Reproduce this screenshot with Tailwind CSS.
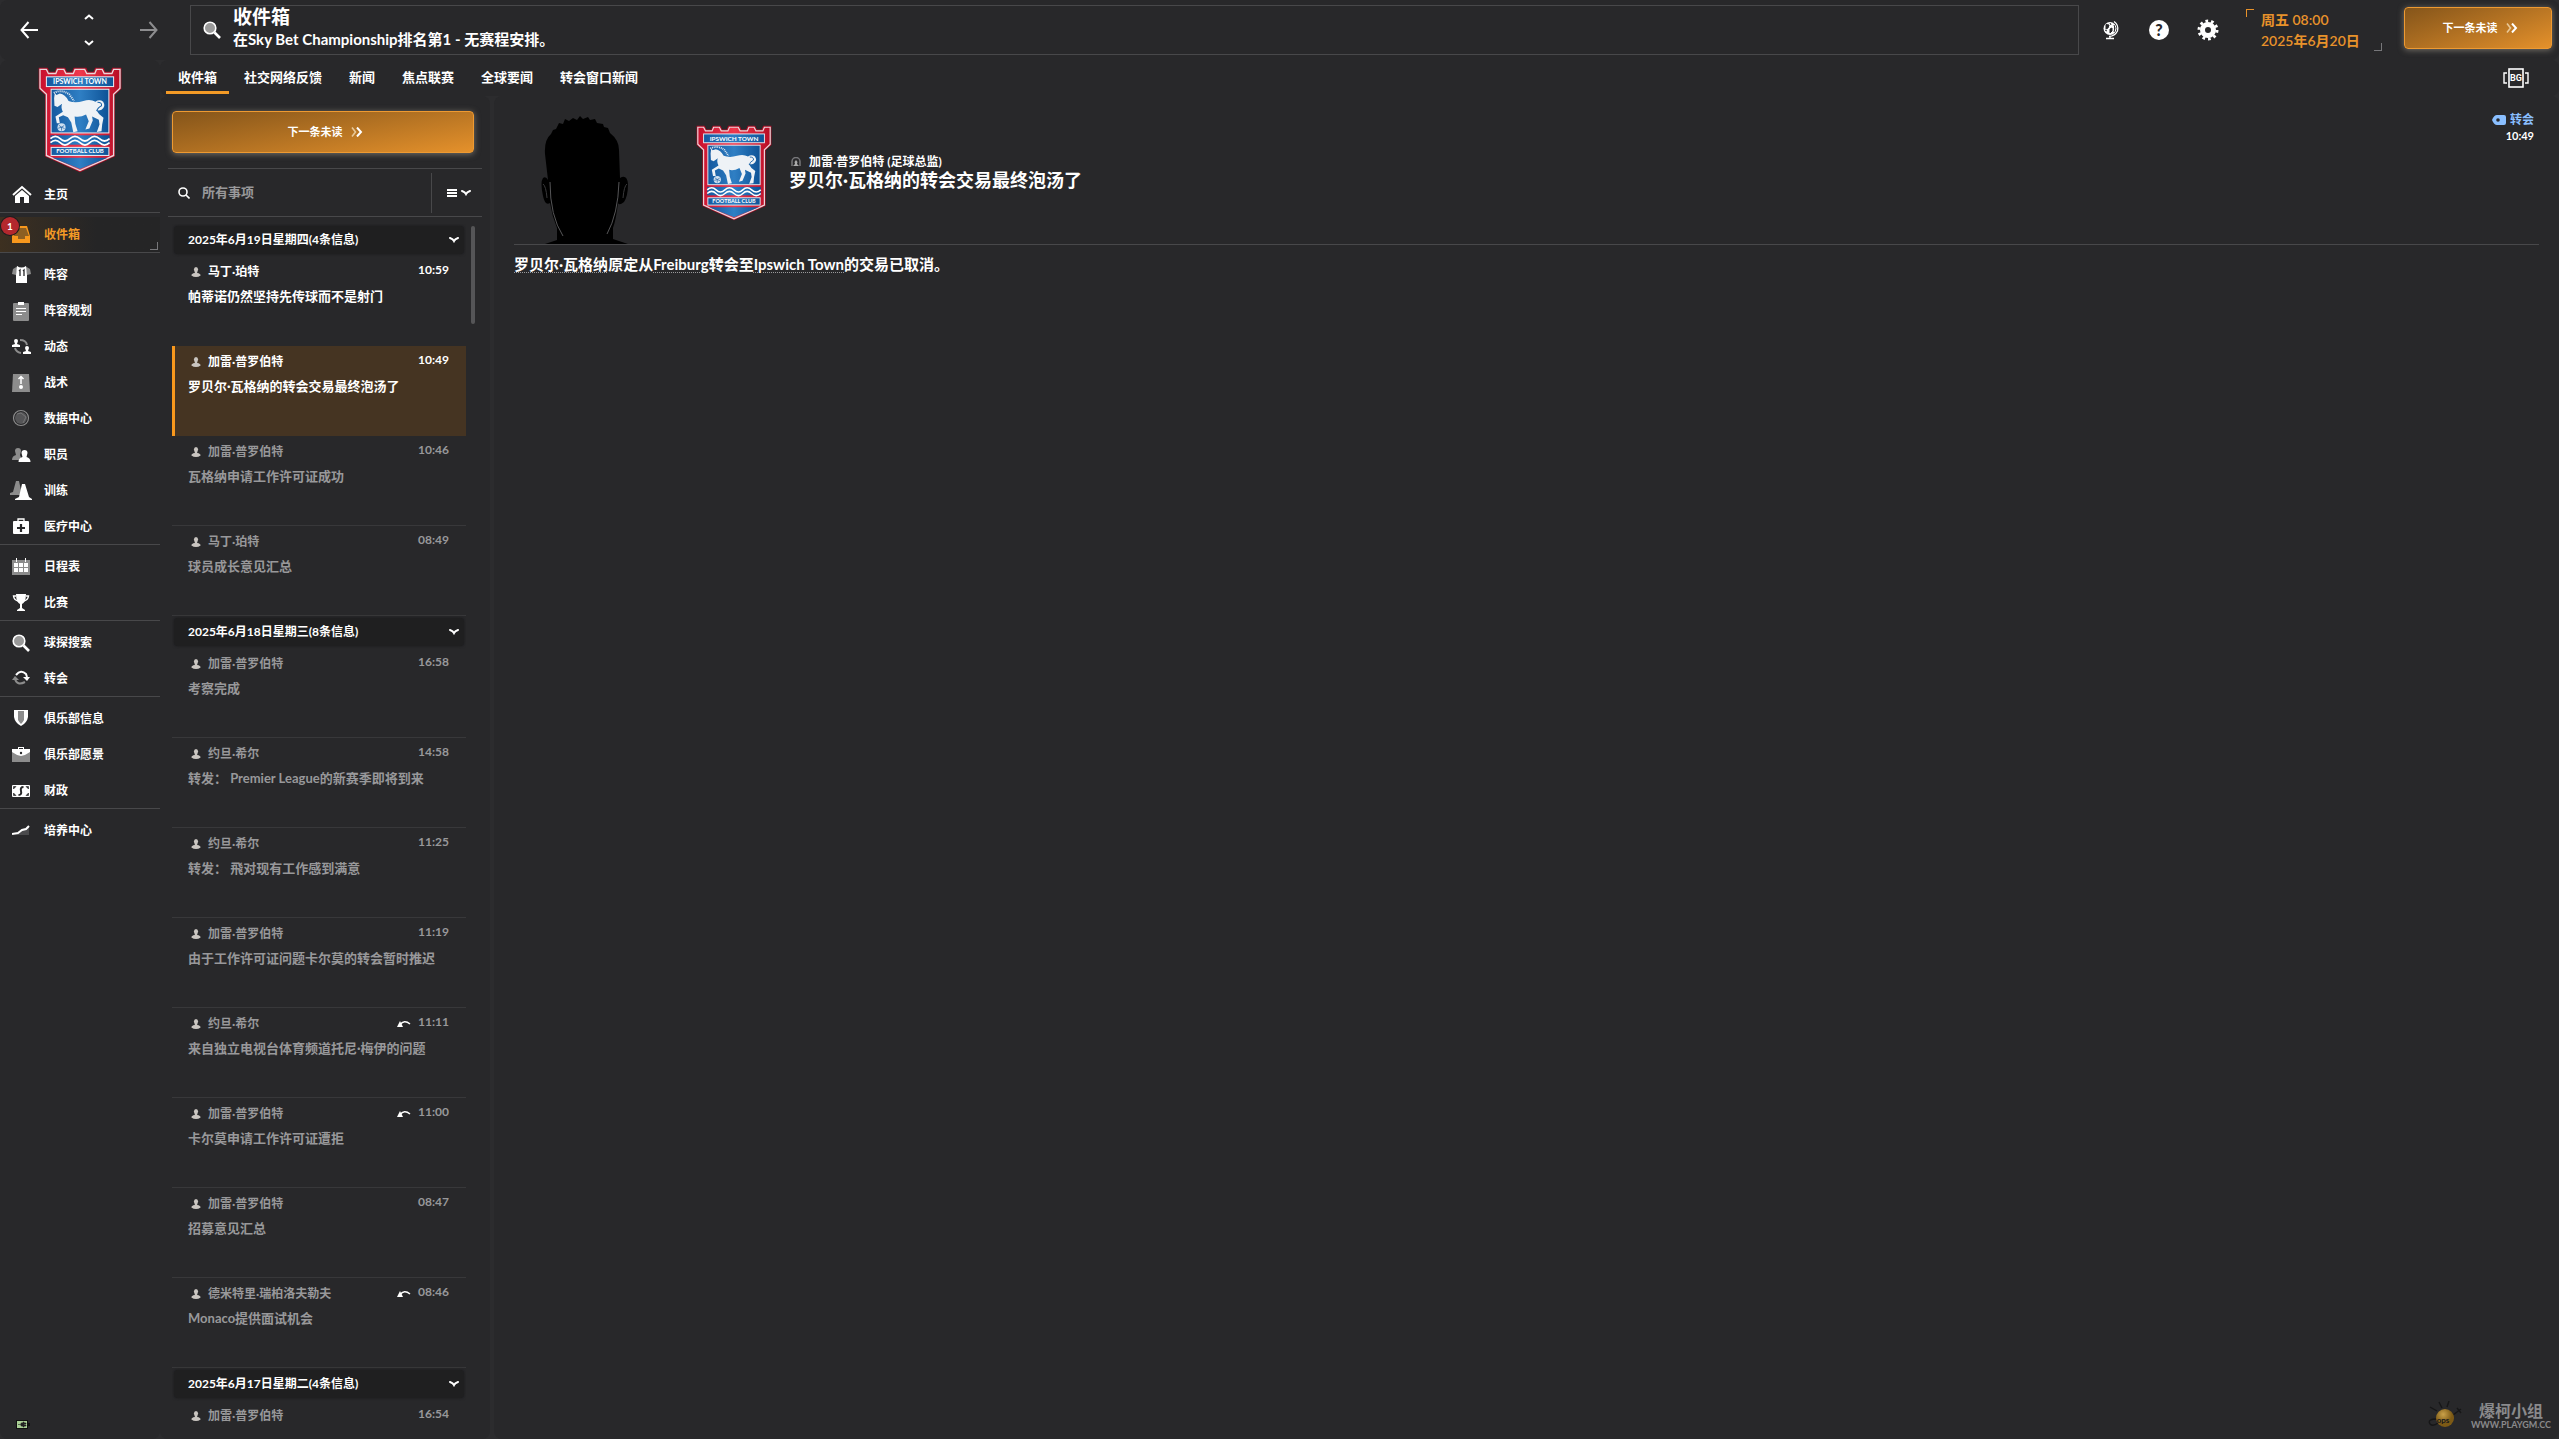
<!DOCTYPE html>
<html lang="zh">
<head>
    <meta charset="UTF-8">
    <meta name="viewport" content="width=device-width, initial-scale=1.0">
    <title>收件箱</title>
    <script src="https://cdn.jsdelivr.net/npm/@tailwindcss/browser@4"></script>
</head>
<body class="h-screen flex flex-col overflow-hidden bg-[#2c2c2e] text-white font-bold text-xs font-['Lato','Noto_Sans_CJK_SC',sans-serif]">

    <!-- 共用圖示 -->
    <svg class="absolute w-0 h-0">
        <defs>
            <linearGradient id="blue" x1="0" x2="1"><stop offset="0" stop-color="#15599f"/><stop offset=".5" stop-color="#2f7fc4"/><stop offset="1" stop-color="#0d5296"/></linearGradient>
            <linearGradient id="red" x1="0" x2="1"><stop offset="0" stop-color="#c8102e"/><stop offset=".5" stop-color="#f0384c"/><stop offset="1" stop-color="#b80d26"/></linearGradient>
        </defs>
        <symbol id="crest" viewBox="55 35 250 315">
            <path d="M57 37H84L89 49H105L110 37H136L141 49H156L161 37H199L204 49H220L225 37H250L255 49H271L276 37H303V100L284 118V301L180 348L76 301V118L57 100Z" fill="#a80d24"/>
            <path d="M61 42H80L86 54H108L113 42H132L138 54H160L165 42H194L200 54H224L229 42H246L252 54H275L280 42H299V98L280 116V298L180 343L80 298V116L61 98Z" fill="url(#red)" stroke="#e9d6da" stroke-width="4"/>
            <rect x="80" y="64" width="200" height="29" fill="url(#blue)" stroke="#e8eef5" stroke-width="3"/>
            <rect x="94" y="101" width="172" height="130" fill="url(#blue)" stroke="#e8eef5" stroke-width="3"/>
            <path d="M102 112q24-12 46 4l14 20" fill="none" stroke="#e8eef5" stroke-width="6" stroke-dasharray="3 3"/>
            <path d="M103 128L105 112L110 118L120 114Q136 116 146 136Q166 143 190 136Q210 129 226 138Q238 130 249 138Q258 152 244 162Q234 166 228 162Q236 178 250 186L246 206L244 226L230 228L238 206L236 192L216 182L218 194L208 218L196 221L206 196L198 176Q180 186 164 182L166 204L173 226L160 229L154 200L144 184L130 178L117 184L120 202L111 202L107 182L129 168Q122 154 127 144L113 154L104 150Z" fill="#eef2f6"/>
            <path d="M232 140Q246 140 244 150Q232 156 230 166" fill="none" stroke="#1c64a8" stroke-width="3"/>
            <circle cx="125" cy="214" r="12" fill="#cfe0f0"/>
            <path d="M117 208l8 6l8-5M125 214v10M115 217l10-3l9 4" stroke="#15599f" stroke-width="2" fill="none"/>
            <rect x="92" y="238" width="176" height="28" fill="url(#blue)"/>
            <path d="M92 248q15-14 29 0t29 0t30 0t29 0t29 0t30 0M92 260q15-14 29 0t29 0t30 0t29 0t29 0t30 0" fill="none" stroke="#fff" stroke-width="5"/>
            <rect x="94" y="274" width="172" height="24" fill="url(#blue)" stroke="#e8eef5" stroke-width="3"/>
            <path d="M98 305H262L180 338Z" fill="url(#blue)"/>
        </symbol>
        <symbol id="person" viewBox="0 0 10 10">
            <ellipse cx="5" cy="2.6" rx="2.1" ry="2.6"/><path d="M3.8 4h2.4v2Q9.600 6.500 9.600 8.500Q7.500 10 5 10T.4 8.500Q.4 6.500 3.800 6z"/>
        </symbol>
        <symbol id="chevron" viewBox="0 0 10 6">
            <path d="M1 1q3 1 4 3q1-2 4-3" fill="none" stroke="currentColor" stroke-width="2" stroke-linecap="round"/>
        </symbol>
        <symbol id="double" viewBox="0 0 12 10">
            <path d="M1 .5L4.500 5L1 9.500" fill="none" stroke="#e8c898" stroke-width="1.600"/><path d="M6 .5L10 5L6 9.500" fill="none" stroke="#fff" stroke-width="2"/>
        </symbol>
        <symbol id="search" viewBox="0 0 18 18">
            <circle cx="7" cy="7" r="5.800" fill="#9a9a9a" stroke="#fff" stroke-width="1.600"/><path d="M11.500 11.500L17 17" stroke="#fff" stroke-width="2.600"/>
        </symbol>
    </svg>

    <!-- 頂部列 -->
    <header class="h-15 shrink-0 flex items-center bg-[#28282a] rounded-lg">
        <div class="w-[190px] shrink-0 flex items-center justify-between pl-5 pr-8">
            <button aria-label="後退"><svg class="w-[18px] h-5" viewBox="0 0 18 20" fill="none" stroke="#fff" stroke-width="2"><path d="M1 10H18M8.500 2L1.500 10L8.500 18"/></svg></button>
            <div class="flex flex-col gap-5">
                <button aria-label="上一項"><svg class="w-2.5 h-1.5" viewBox="0 0 10 6" fill="none" stroke="#fff" stroke-width="2"><path d="M1 5L5 1.500L9 5"/></svg></button>
                <button aria-label="下一項"><svg class="w-2.5 h-1.5" viewBox="0 0 10 6" fill="none" stroke="#fff" stroke-width="2"><path d="M1 1L5 4.500L9 1"/></svg></button>
            </div>
            <button aria-label="前進"><svg class="w-[18px] h-5" viewBox="0 0 18 20" fill="none" stroke="#8d8d8f" stroke-width="2"><path d="M0 10H17M9.500 2L16.500 10L9.500 18"/></svg></button>
        </div>
        <div class="flex-1 h-[50px] flex items-center gap-3 pl-3 border border-[#48484a]">
            <svg class="w-[18px] h-[18px]"><use href="#search"/></svg>
            <div class="pb-1.5">
                <h1 class="text-[19px] leading-6">收件箱</h1>
                <p class="text-[15px] leading-5">在Sky Bet Championship排名第1 - 无赛程安排。</p>
            </div>
        </div>
        <div class="flex items-center gap-7 pl-[22px] pr-[27px]">
            <button aria-label="世界"><svg class="w-5 h-5" viewBox="0 0 20 20"><circle cx="9" cy="8.500" r="6.500" fill="#fff"/><path d="M5 4.500l3 .5l-1 3l-2 1zM4 10l2 1M9 3l1 2M9 9l2-1v3l-2 2zM13 5l1 3l-1 4" fill="#28282a" stroke="#28282a" stroke-width="1"/><path d="M13 1.500Q18 5 16.500 11Q14 16 8 16.500M9 16v2.500M5 18.500h8" fill="none" stroke="#fff" stroke-width="1.300"/></svg></button>
            <button aria-label="幫助" class="w-5 h-5 rounded-full bg-white text-[#28282a] text-base leading-5 font-black">?</button>
            <button aria-label="設定"><svg class="w-[22px] h-[22px]" viewBox="0 0 22 22"><circle cx="11" cy="11" r="5.500" fill="none" stroke="#fff" stroke-width="5"/><circle cx="11" cy="11" r="9" fill="none" stroke="#fff" stroke-width="3" stroke-dasharray="2.700 2.955"/></svg></button>
        </div>
        <div class="relative w-[136px] h-[42px] pl-[15px] text-[#e8922a] text-sm font-semibold leading-[21px]">
            <span class="absolute left-0 top-0 w-2 h-2 border-t border-l border-[#e8922a]"></span>
            <p>周五 08:00</p>
            <p>2025年6月20日</p>
            <span class="absolute right-0 bottom-0 w-2 h-2 border-b border-r border-[#77777a]"></span>
        </div>
        <button class="w-[148px] h-[42px] ml-[22px] mr-[7px] mb-1 pl-1 flex items-center justify-center gap-2 rounded border border-[#ee9a32] bg-linear-160 from-[#85551a] to-[#e5912b] text-[11px] shadow-[0_1px_6px_#77726a]">
            下一条未读 <svg class="w-3 h-2.5"><use href="#double"/></svg>
        </button>
    </header>

    <div class="flex-1 min-h-0 flex">
        <!-- 側邊導航 -->
        <nav class="w-40 shrink-0 flex flex-col bg-[#28282a] rounded-lg">
            <svg class="w-[84px] h-[106px] mt-[7px] ml-[38px] mb-1 shrink-0" viewBox="55 35 250 315" font-weight="700" fill="#fff" text-anchor="middle">
                <use href="#crest" x="55" y="35" width="250" height="315"/>
                <text x="180" y="86" font-size="21">IPSWICH TOWN</text>
                <text x="180" y="292" font-size="18">FOOTBALL CLUB</text>
            </svg>
            <div class="flex flex-col gap-1">
                <ul class="border-b border-[#48484a]">
                    <li><a href="#" class="h-[35px] flex items-center gap-3 pl-3"><svg class="w-5 h-5" viewBox="0 0 20 20"><path d="M1 10L10 2L19 10" fill="none" stroke="#fff" stroke-width="2"/><path d="M3 11L10 5L17 11V18H12V12H8V18H3Z" fill="#fff"/></svg>主页</a></li>
                </ul>
                <ul class="border-b border-[#48484a]">
                    <li class="relative bg-linear-to-r from-[#3d3020] to-[#252526] to-60%">
                        <a href="#" class="h-[35px] flex items-center gap-3 pl-3 text-[#f39a26]"><svg class="w-5 h-5" viewBox="0 0 20 20"><path d="M3 1H15L18 11V18H0V11Z" fill="#f8981d"/><path d="M4 3H14L17 11H13V14H6V11H2Z" fill="#8d5f22"/></svg>收件箱</a>
                        <span class="absolute left-px top-0 w-[18px] h-[18px] rounded-full bg-[#b3282d] ring-1 ring-[#1d1d1f] text-center text-[10px] text-white leading-[18px]">1</span>
                        <span class="absolute right-0.5 bottom-0.5 w-2 h-2 border-b border-r border-[#77777a]"></span>
                    </li>
                </ul>
                <ul class="border-b border-[#48484a]">
                    <li><a href="#" class="h-9 flex items-center gap-3 pl-3"><svg class="w-5 h-5" viewBox="0 0 20 20"><path d="M6 1L1 4L0 9L4 10M13 1L18 4L19 9L15 10" fill="#8c8c8c"/><path d="M5 1Q9.500 4 14 1L15 10V18H4V10Z" fill="#fff"/><path d="M7 6l1-1v6M11 6l1-1v6" stroke="#28282a" stroke-width="1.300" fill="none"/></svg>阵容</a></li>
                    <li><a href="#" class="h-9 flex items-center gap-3 pl-3"><svg class="w-5 h-5" viewBox="0 0 20 20"><rect x="1" y="2" width="16" height="18" rx="1" fill="#8c8c8c"/><path d="M6 1h6v3H6zM4 7h10v1H4zM4 10h10v1H4zM4 13h6v1H4z" fill="#fff"/></svg>阵容规划</a></li>
                    <li><a href="#" class="h-9 flex items-center gap-3 pl-3"><svg class="w-5 h-5" viewBox="0 0 20 20"><path d="M8 3Q14 3 15 8M3 11Q4 15 9 16" fill="none" stroke="#8c8c8c" stroke-width="2"/><path d="M4 2a2 2 0 0 1 2 2l-1 3l3 1v2H0V8l3-1l-1-3a2 2 0 0 1 2-2zM15 9a2 2 0 0 1 2 2l-1 3l3 1v2H11V15l3-1l-1-3a2 2 0 0 1 2-2z" fill="#fff"/></svg>动态</a></li>
                    <li><a href="#" class="h-9 flex items-center gap-3 pl-3"><svg class="w-5 h-5" viewBox="0 0 20 20"><path d="M1 1h16l1 18H0z" fill="#8c8c8c"/><path d="M9 4v7M6.500 6L9 3.500L11.500 6" stroke="#fff" stroke-width="1.500" fill="none"/><circle cx="9" cy="14" r="2" fill="#fff"/></svg>战术</a></li>
                    <li><a href="#" class="h-9 flex items-center gap-3 pl-3"><svg class="w-5 h-5" viewBox="0 0 20 20"><circle cx="9" cy="9" r="7.500" fill="none" stroke="#8c8c8c" stroke-width="1.200"/><circle cx="9" cy="9" r="6" fill="#555557"/><path d="M5 5l4-1l5 4l-3 6" stroke="#8c8c8c" stroke-width=".6" fill="none"/></svg>数据中心</a></li>
                    <li><a href="#" class="h-9 flex items-center gap-3 pl-3"><svg class="w-5 h-5" viewBox="0 0 20 20"><path d="M6 3a3 3 0 0 1 3 3l-1 4l2 5H0q0-4 4-5l-1-4a3 3 0 0 1 3-3z" fill="#8c8c8c"/><path d="M12.500 5a3 3 0 0 1 3 3l-1 4q4 1 4 5H6.500q0-4 4-5l-1-4a3 3 0 0 1 3-3z" fill="#fff"/></svg>职员</a></li>
                    <li><a href="#" class="h-9 flex items-center gap-3 pl-3"><svg class="w-5 h-5 overflow-visible" viewBox="0 0 20 20"><path d="M4 0h3l3 14H-2v-2L1 11z" fill="#8c8c8c"/><path d="M10 3h3l4 13l3 2v1H3v-1l4-2z" fill="#fff"/></svg>训练</a></li>
                    <li><a href="#" class="h-[35px] flex items-center gap-3 pl-3"><svg class="w-5 h-5" viewBox="0 0 20 20"><path d="M6 5V2h6v3" fill="none" stroke="#fff" stroke-width="1.300"/><rect x="1" y="4" width="16" height="13" rx="1" fill="#fff"/><path d="M9 7v8M5 11h8" stroke="#28282a" stroke-width="2.200"/></svg>医疗中心</a></li>
                </ul>
                <ul class="border-b border-[#48484a]">
                    <li><a href="#" class="h-9 flex items-center gap-3 pl-3"><svg class="w-5 h-5" viewBox="0 0 20 20"><path d="M0 3h18v15H0z" fill="#8c8c8c"/><path d="M4 1h1v4H4zM13 1h1v4h-1zM2 6h4v4H2zM7 6h4v4H7zM12 6h4v4h-4zM2 11h4v4H2zM7 11h4v4H7zM12 11h4v4h-4z" fill="#fff"/></svg>日程表</a></li>
                    <li><a href="#" class="h-[35px] flex items-center gap-3 pl-3"><svg class="w-5 h-5" viewBox="0 0 20 20"><path d="M4 1h10Q14 9 10 11V15l3 2v1H5v-1l3-2V11Q4 9 4 1z" fill="#fff"/><path d="M4 3H1.500Q2 7 6 8M14 3h2.500Q16 7 12 8" fill="none" stroke="#fff" stroke-width="1.400"/></svg>比赛</a></li>
                </ul>
                <ul class="border-b border-[#48484a]">
                    <li><a href="#" class="h-9 flex items-center gap-3.5 pl-3"><svg class="w-[18px] h-[18px]"><use href="#search"/></svg>球探搜索</a></li>
                    <li><a href="#" class="h-[35px] flex items-center gap-3 pl-3"><svg class="w-5 h-5" viewBox="0 0 20 20"><path d="M4 6Q9 0 14 5L15 8" fill="none" stroke="#fff" stroke-width="2"/><path d="M11 8h7l-3 4z" fill="#fff"/><path d="M3 10Q5 17 13 13" fill="none" stroke="#8c8c8c" stroke-width="2"/><path d="M0 11h7L3 7z" fill="#8c8c8c"/></svg>转会</a></li>
                </ul>
                <ul class="border-b border-[#48484a]">
                    <li><a href="#" class="h-9 flex items-center gap-3 pl-3"><svg class="w-5 h-5" viewBox="0 0 20 20"><path d="M2 1h14v7q-1 6-7 9q-6-3-7-9z" fill="#fff"/><path d="M6 2h6v9q-1 2-3 4q-2-2-3-4z" fill="#8c8c8c"/></svg>俱乐部信息</a></li>
                    <li><a href="#" class="h-9 flex items-center gap-3 pl-3"><svg class="w-5 h-5" viewBox="0 0 20 20"><path d="M0 7h18v10H0z" fill="#8c8c8c"/><path d="M6 4V2h6v2h6v3q-4 3-9 4q-5-1-9-4V4zM7 4h4V3H7z" fill="#fff" fill-rule="evenodd"/><circle cx="9" cy="8" r="1.200" fill="#28282a"/></svg>俱乐部愿景</a></li>
                    <li><a href="#" class="h-[35px] flex items-center gap-3 pl-3"><svg class="w-5 h-5" viewBox="0 0 20 20"><rect y="4" width="18" height="12" rx="1" fill="#fff"/><path d="M1.500 5.500h2.500L1.500 8zM16.500 5.500h-2.500l2.500 2.500zM1.500 14.500h2.500l-2.500-2.500zM16.500 14.500h-2.500l2.500-2.500z" stroke="#28282a" fill="#28282a" stroke-width=".6"/><path d="M11.500 6Q8 6 9 10T6.500 14" stroke="#28282a" stroke-width="2" fill="none"/></svg>财政</a></li>
                </ul>
                <ul>
                    <li><a href="#" class="h-9 flex items-center gap-3 pl-3"><svg class="w-5 h-5" viewBox="0 0 20 20"><path d="M1 14l5-1l4-4l7-3v8z" fill="#4a4a4c"/><path d="M0 13l6-1l4-3l4-1l3-3" fill="none" stroke="#fff" stroke-width="2"/></svg>培养中心</a></li>
                </ul>
            </div>
            <svg class="w-[14px] h-[9px] mt-auto ml-4 mb-2.5" viewBox="0 0 14 9"><rect width="12" height="9" fill="#111"/><rect x="1" y="1" width="10" height="7" fill="#a9cf95"/><path d="M2 4.500h3M5 3h2V2h1v1h2v1H8v1h2v1H8v1H7V6H5z" fill="#222" stroke="#222" stroke-width=".6"/><path d="M12 3h2v3h-2z" fill="#111"/></svg>
        </nav>

        <div class="flex-1 min-w-0 flex flex-col">
            <!-- 分頁標籤 -->
            <div class="h-9 shrink-0 flex items-stretch justify-between pl-1.5 pr-[30px] bg-[#28282a] rounded-lg">
                <div class="flex gap-[3px] pb-0.5 text-[13px]">
                    <button class="px-3 pt-1 border-b-3 border-[#f39a26]">收件箱</button>
                    <button class="px-3 pt-1 border-b-3 border-transparent">社交网络反馈</button>
                    <button class="px-3 pt-1 border-b-3 border-transparent">新闻</button>
                    <button class="px-3 pt-1 border-b-3 border-transparent">焦点联赛</button>
                    <button class="px-3 pt-1 border-b-3 border-transparent">全球要闻</button>
                    <button class="px-3 pt-1 border-b-3 border-transparent">转会窗口新闻</button>
                </div>
                <button class="flex items-center" aria-label="BG">
                    <svg class="w-[26px] h-5" viewBox="0 0 26 20"><path d="M4 5H1V15H4M22 5H25V15H22" fill="none" stroke="#fff" stroke-width="1.400"/><rect x="6" y="1" width="14" height="18" fill="none" stroke="#fff" stroke-width="1.600"/><text x="13" y="13" text-anchor="middle" font-size="9" font-weight="700" font-family="Roboto" fill="#fff">BG</text></svg>
                </button>
            </div>

            <div class="flex-1 min-h-0 flex gap-1">
                <!-- 郵件列表 -->
                <section class="w-[330px] shrink-0 flex flex-col pl-2 bg-[#28282a] rounded-lg">
                    <button class="w-[302px] h-[42px] mx-1 my-[15px] pl-1 shrink-0 flex items-center justify-center gap-2 rounded border border-[#ee9a32] bg-linear-170 from-[#85551a] to-[#e5912b] text-[11px] shadow-[0_1px_6px_#77726a]">
                        下一条未读 <svg class="w-3 h-2.5"><use href="#double"/></svg>
                    </button>
                    <div class="h-[49px] mr-2 shrink-0 flex items-center border-y border-[#48484a]">
                        <svg class="w-3 h-3 ml-2.5 mr-3" viewBox="0 0 12 12" fill="none" stroke="#fff" stroke-width="1.600"><circle cx="5" cy="5" r="4"/><path d="M8 8L11.500 11.500"/></svg>
                        <input type="text" aria-label="搜索" placeholder="所有事项" class="flex-1 min-w-0 text-[13px] outline-none placeholder:text-[#98989a]">
                        <button class="h-10 w-[51px] flex items-center gap-1 pl-[15px] border-l border-[#48484a]" aria-label="篩選">
                            <svg class="w-2.5 h-2.5" viewBox="0 0 10 10" fill="#fff"><path d="M0 1h10v2H0zM0 4h10v2H0zM0 7h10v2H0z"/></svg>
                            <svg class="w-2.5 h-1.5"><use href="#chevron"/></svg>
                        </button>
                    </div>
                    <div class="flex-1 min-h-0 flex pt-[7px]">
                        <div id="message-list" class="w-[294px] ml-1 overflow-hidden"></div>
                        <div class="w-1 h-[98px] ml-[5px] mt-0.5 rounded-full bg-[#555557]"></div>
                    </div>
                </section>

                <!-- 郵件內容 -->
                <main class="flex-1 min-w-0 flex flex-col px-5 bg-[#28282a] rounded-lg">
                    <div class="h-[149px] shrink-0 flex items-end border-b border-[#48484a]">
                        <svg class="w-[88px] h-32 ml-[27px] shrink-0" viewBox="0 0 88 128">
                            <path d="M4 38Q3 24 10 18L12 14L15 13L18 7L22 8L24 3L28 5L32 2L36 4L39 0L42 3L47 1L49 4L54 3L56 7L62 8L63 11L67 12L69 17Q78 24 78 34L79 62Q86 58 87 68Q87 80 83 86Q78 90 77 87Q75 104 72 112V123L87 128H4L16 124V112Q11 100 9 87Q4 90 2 80Q-1 66 2 62Q5 60 7 64Z" fill="#000"/>
                            <path d="M9 66Q9 100 22 120M78 66Q77 98 66 118" fill="none" stroke="#6b6b6d" stroke-width=".8"/>
                            <path d="M2 68q3 2 4 14M86 68q-3 2-4 14" fill="none" stroke="#39393b"/>
                        </svg>
                        <svg class="w-[76px] h-24 ml-[67px] mb-[23px] shrink-0" viewBox="55 35 250 315" font-weight="700" fill="#fff" text-anchor="middle">
                            <use href="#crest" x="55" y="35" width="250" height="315"/>
                            <text x="180" y="86" font-size="21">IPSWICH TOWN</text>
                            <text x="180" y="292" font-size="18">FOOTBALL CLUB</text>
                        </svg>
                        <div class="ml-[17px] mb-[54px] flex-1">
                            <p class="flex items-center gap-2 text-xs leading-4"><svg class="w-2.5 h-2.5 ml-0.5" viewBox="0 0 10 10"><path d="M1 9V4.500a4 4 0 0 1 8 0V9" fill="none" stroke="#77777a" stroke-width="1.500"/><path d="M5 3l1.500 2L6 7l2 2H2l2-2l-.5-2z" fill="#aaa"/></svg>加雷·普罗伯特 (足球总监)</p>
                            <h2 class="text-lg leading-5">罗贝尔·瓦格纳的转会交易最终泡汤了</h2>
                        </div>
                        <div class="self-start mt-4 mr-[5px] flex flex-col items-end leading-4">
                            <a href="#" class="flex items-center gap-1 text-[#8abfff]"><svg class="w-3.5 h-2.5" viewBox="0 0 14 10"><path d="M0 5Q2 0 5 0H12Q14 0 14 2V8Q14 10 12 10H5Q2 10 0 5Z" fill="#8abfff"/><circle cx="6" cy="5" r="1.800" fill="#28282a"/></svg>转会</a>
                            <span class="text-[11px]">10:49</span>
                        </div>
                    </div>
                    <p class="mt-[7px] text-[15px] leading-6"><a href="#" class="underline decoration-dotted decoration-1 decoration-[#98989a] underline-offset-2">罗贝尔·瓦格纳</a>原定从<a href="#" class="underline decoration-dotted decoration-1 decoration-[#98989a] underline-offset-2">Freiburg</a>转会至<a href="#" class="underline decoration-dotted decoration-1 decoration-[#98989a] underline-offset-2">Ipswich Town</a>的交易已取消。</p>
                    <!-- 浮水印 -->
                    <div class="mt-auto mb-1.5 -mr-3 flex items-center justify-end gap-2 text-[#8a8a8c]">
                        <svg class="w-9 h-8" viewBox="0 0 36 32"><defs><radialGradient id="ball" cx=".4" cy=".3"><stop offset="0" stop-color="#c9a14a"/><stop offset="1" stop-color="#7d5a15"/></radialGradient></defs><path d="M10 10L3 6M15 7L12 1M20 6L22 0M26 14L34 8M30 7l4 5M10 18Q0 18 3 23Q6 26 11 22" fill="none" stroke="#161617" stroke-width="1.400"/><circle cx="18" cy="17" r="9" fill="url(#ball)"/><text x="16" y="22" text-anchor="middle" font-size="8" font-weight="900" fill="#1b1b1b">ops</text></svg>
                        <div class="text-center">
                            <p class="text-base leading-4">爆柯小组</p>
                            <p class="text-[9px] leading-3">WWW.PLAYGM.CC</p>
                        </div>
                    </div>
                </main>
            </div>
        </div>
    </div>

    <script>
        const groups = [
            { date: '2025年6月19日星期四(4条信息)', items: [
                { from: '马丁·珀特', time: '10:59', title: '帕蒂诺仍然坚持先传球而不是射门', state: 'unread' },
                { from: '加雷·普罗伯特', time: '10:49', title: '罗贝尔·瓦格纳的转会交易最终泡汤了', state: 'selected' },
                { from: '加雷·普罗伯特', time: '10:46', title: '瓦格纳申请工作许可证成功' },
                { from: '马丁·珀特', time: '08:49', title: '球员成长意见汇总' },
            ] },
            { date: '2025年6月18日星期三(8条信息)', items: [
                { from: '加雷·普罗伯特', time: '16:58', title: '考察完成' },
                { from: '约旦·希尔', time: '14:58', title: '转发： Premier League的新赛季即将到来' },
                { from: '约旦·希尔', time: '11:25', title: '转发： 飛对现有工作感到满意' },
                { from: '加雷·普罗伯特', time: '11:19', title: '由于工作许可证问题卡尔莫的转会暂时推迟' },
                { from: '约旦·希尔', time: '11:11', title: '来自独立电视台体育频道托尼·梅伊的问题', reply: true },
                { from: '加雷·普罗伯特', time: '11:00', title: '卡尔莫申请工作许可证遭拒', reply: true },
                { from: '加雷·普罗伯特', time: '08:47', title: '招募意见汇总' },
                { from: '德米特里·瑞柏洛夫勒夫', time: '08:46', title: 'Monaco提供面试机会', reply: true },
            ] },
            { date: '2025年6月17日星期二(4条信息)', items: [
                { from: '加雷·普罗伯特', time: '16:54', title: '' },
            ] },
        ];

        // 已讀、未讀、選中三種樣式
        const styles = {
            read: 'border-b border-[#38383a] pl-4 text-[#98989a]',
            unread: 'border-b border-transparent pl-4 text-white',
            selected: 'border-l-3 border-[#f8981d] bg-[#453422] pl-[13px] text-white',
        };
        const replyIcon = '<svg class="w-3.5 h-2" viewBox="0 0 14 8"><path d="M3 5Q7-1 13 4" fill="none" stroke="#fff" stroke-width="1.500"/><path d="M0 7L3 1L6 7Z" fill="#fff"/></svg>';

        document.getElementById('message-list').innerHTML = groups.map(g => `
            <div class="h-8 px-0.5 py-0.5">
                <button class="w-full h-7 flex items-center justify-between pl-3.5 pr-[5px] rounded bg-[#1f1f20] shadow-[0_0_3px_#1a1a1b]">
                    ${g.date}<svg class="w-2.5 h-1.5"><use href="#chevron"/></svg>
                </button>
            </div>
            ${g.items.map(m => `
            <article class="h-[90px] pr-[17px] pt-1 ${styles[m.state || 'read']}">
                <div class="h-6 flex items-center">
                    <svg class="w-2.5 h-2.5 ml-[3px] mr-[7px]" fill="#c9c5c0"><use href="#person"/></svg>
                    <span class="flex-1">${m.from}</span>
                    ${m.reply ? replyIcon : ''}
                    <time class="w-[38px] text-right leading-5 self-start">${m.time}</time>
                </div>
                <h3 class="text-[13px] leading-6 whitespace-nowrap">${m.title}</h3>
            </article>`).join('')}`).join('');
    </script>
</body>
</html>
